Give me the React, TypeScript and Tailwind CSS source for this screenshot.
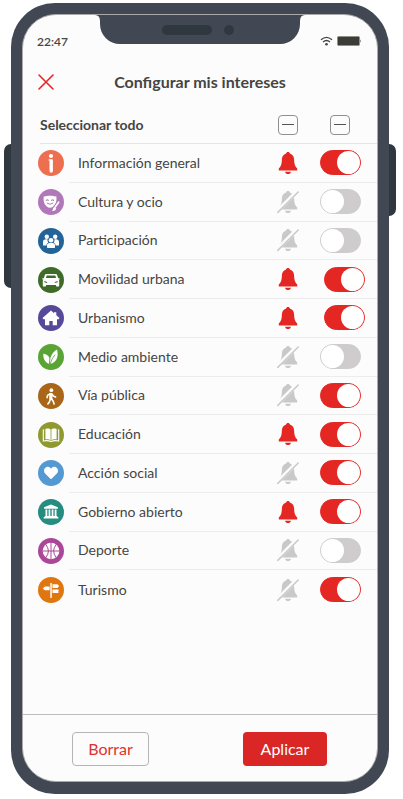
import { useState } from 'react'
import type { ReactNode } from 'react'
import clsx from 'clsx'
import { FaHeart } from 'react-icons/fa'

type Interest = {
  id: string
  label: string
  color: string
  icon: ReactNode
  notify: boolean
  enabled: boolean
  wide?: boolean
}

function InfoIcon() {
  return (
    <svg viewBox="0 0 26 26" className="size-[26px]" fill="currentColor" aria-hidden="true">
      <circle cx="13" cy="6" r="2.1" />
      <path d="M11.2 9.3h3a.7.7 0 0 1 .7.7v11a1.7 1.7 0 0 1-3.4 0V10.700h-.3a.7.7 0 0 1 0-1.400z" />
    </svg>
  )
}

function MaskIcon() {
  return (
    <svg viewBox="0 0 26 26" className="size-[26px]" aria-hidden="true">
      <path
        fill="currentColor"
        d="M5.8 7.3c1.6.5 2.7-.6 6.200-.6s4.600 1.100 6.300.6c.4 2.600.3 5.200-.8 7.400-1.200 2.300-3.200 4-5.500 4s-4.300-1.700-5.400-4c-1.100-2.200-1.200-4.800-.8-7.400z"
      />
      <g fill="none" stroke="#b078b8" strokeLinecap="round">
        <path d="M8.300 11.300q1-1.100 2 0M13.600 11.300q1-1.100 2 0" strokeWidth="1.100" />
        <path d="M9.200 14.300q2.800 2.200 5.600 0" strokeWidth="1" />
        <path d="M21 12.500l-5 7" strokeWidth="3.600" />
      </g>
      <path d="M20.600 13.200l-3.200 4.600" stroke="currentColor" strokeWidth="1.800" strokeLinecap="round" />
      <path fill="currentColor" d="M16.200 17.800l2.100 1.500c-.4 2-2.100 2.900-4.300 2.500 1.100-.8 1-3 2.200-4z" />
    </svg>
  )
}

function PeopleIcon() {
  return (
    <svg viewBox="0 0 26 26" className="size-[26px]" fill="currentColor" aria-hidden="true">
      <circle cx="8.800" cy="8.700" r="2.200" />
      <circle cx="17.200" cy="8.700" r="2.200" />
      <path d="M5 17v-3c0-1.800 1.200-2.800 3-2.800h1.600c-.3 1.600.1 2.600.9 3.300-1.300.5-2 1.500-2.100 3H5.600A.6.600 0 0 1 5 17z" />
      <path d="M21 17v-3c0-1.800-1.200-2.800-3-2.800h-1.600c.3 1.600-.1 2.600-.9 3.300 1.300.5 2 1.500 2.100 3h2.800a.6.600 0 0 0 .6-.5z" />
      <circle cx="13" cy="12.200" r="2.300" />
      <path d="M9 19.200v-1.600c0-1.500 1-2.500 2.500-2.500h3c1.500 0 2.500 1 2.500 2.500v1.600a.7.700 0 0 1-.7.700H9.700a.7.700 0 0 1-.7-.7z" />
    </svg>
  )
}

function CarIcon() {
  return (
    <svg viewBox="0 0 26 26" className="size-[26px]" aria-hidden="true">
      <path
        fill="currentColor"
        fillRule="evenodd"
        d="M8.600 7h8.800c1 0 1.600.5 1.900 1.400l.9 2.800h.9a.7.700 0 0 1 0 1.400h-.5c.4.500.6 1 .6 1.700v4.100a1.200 1.200 0 0 1-1.200 1.200h-.8a1.200 1.200 0 0 1-1.200-1.200v-.5H8v.5a1.200 1.200 0 0 1-1.200 1.200H6a1.200 1.200 0 0 1-1.200-1.200v-4.100c0-.7.200-1.200.6-1.700h-.5a.7.700 0 0 1 0-1.400h.9l.9-2.800C7 7.500 7.600 7 8.600 7zm.1 1.500-.8 2.600h10.200l-.8-2.600zM6.300 14v1.300l2.900.6v-1zm13.400 0-2.900.9v1l2.900-.6z"
      />
    </svg>
  )
}

function HouseIcon() {
  return (
    <svg viewBox="0 0 26 26" className="size-[26px]" fill="currentColor" aria-hidden="true">
      <path d="M13 5.600l3 2.600V7.200h2.300v3l3.200 2.800-1 1.300H19v6h-4.300V16h-3.400v4.300H7v-6H5.500l-1-1.300z" />
    </svg>
  )
}

function LeavesIcon() {
  return (
    <svg viewBox="0 0 26 26" className="size-[26px]" aria-hidden="true">
      <path fill="currentColor" d="M5.300 9.800c3.400.3 6 2.300 6.500 5.500l-.7 4.600c-3.900-1.200-6-4.800-5.800-10.100z" />
      <path fill="currentColor" d="M19 5.500c1.900 6.900-.2 12.900-7 14.600-.7-5.700 1.700-11.400 7-14.600z" />
      <path fill="none" stroke="#5aa435" strokeWidth=".8" d="M12.100 20.200q1.600-5.800 5-9.600M11.700 14.500v5.700" />
    </svg>
  )
}

function WalkerIcon() {
  return (
    <svg viewBox="0 0 26 26" className="size-[26px]" aria-hidden="true">
      <circle cx="13.400" cy="7.200" r="1.900" fill="currentColor" />
      <path d="M12.800 11.400v4" stroke="currentColor" strokeWidth="3.200" strokeLinecap="round" />
      <path
        fill="none"
        stroke="currentColor"
        strokeWidth="1.600"
        strokeLinecap="round"
        strokeLinejoin="round"
        d="M11.800 10.800l-2.300 1.500-.4 2.400M14 11l1.300 2 2.300 1M12.400 16l-.9 2.700-1.600 2.300M13.500 15.800l1.700 2.400.9 2.800"
      />
    </svg>
  )
}

function BookIcon() {
  return (
    <svg viewBox="0 0 26 26" className="size-[26px]" aria-hidden="true">
      <path fill="currentColor" d="M12.600 7.600C11.400 6.300 9.200 6.400 7.400 7v10.400c1.900-.3 3.800-.2 5.200 1zM13.400 7.600c1.200-1.300 3.400-1.200 5.200-.6v10.400c-1.900-.3-3.800-.2-5.200 1z" />
      <path fill="none" stroke="currentColor" strokeWidth="1.100" d="M6.200 8H5.300v11c2.700-.5 5.400-.5 7.700.5 2.300-1 5-1 7.700-.5V8h-.9" />
    </svg>
  )
}

function MuseumIcon() {
  return (
    <svg viewBox="0 0 26 26" className="size-[26px]" fill="currentColor" aria-hidden="true">
      <path d="M13 5.600l6.900 2.700v1.500H6.100V8.300zM7.500 10.500h1.800v6.400H7.500zM10.600 10.500h1.700v6.400h-1.700zM13.700 10.500h1.700v6.400h-1.700zM16.700 10.500h1.800v6.400h-1.800zM6.800 17.100h12.400v.7l1.200.5v1.200H5.600v-1.200l1.200-.5z" />
    </svg>
  )
}

function BallIcon() {
  return (
    <svg viewBox="0 0 26 26" className="size-[26px]" aria-hidden="true">
      <circle cx="13" cy="13" r="8.300" fill="currentColor" />
      <path
        fill="none"
        stroke="#ab4798"
        strokeWidth="1"
        d="M13 4.500v17M4.500 13h17M7.800 6.500q5.200 6.500 0 13M18.200 6.500q-5.200 6.500 0 13"
      />
    </svg>
  )
}

function SignpostIcon() {
  return (
    <svg viewBox="0 0 26 26" className="size-[26px]" fill="currentColor" aria-hidden="true">
      <path d="M12.300 6h1.500v15h-1.500zM14.500 7.200h4.900l1.800 1.900-1.800 1.900h-4.900zM14.500 12.500h6v3.600h-6zM11.600 9.600v3.700H6.800L4.900 11.500l1.900-1.900z" />
    </svg>
  )
}

const INTERESTS: Interest[] = [
  { id: 'info', label: 'Información general', color: 'bg-[#ee6e50]', icon: <InfoIcon />, notify: true, enabled: true },
  { id: 'cultura', label: 'Cultura y ocio', color: 'bg-[#b078b8]', icon: <MaskIcon />, notify: false, enabled: false },
  { id: 'participacion', label: 'Participación', color: 'bg-[#246398]', icon: <PeopleIcon />, notify: false, enabled: false },
  { id: 'movilidad', label: 'Movilidad urbana', color: 'bg-[#3f6b29]', icon: <CarIcon />, notify: true, enabled: true, wide: true },
  { id: 'urbanismo', label: 'Urbanismo', color: 'bg-[#574999]', icon: <HouseIcon />, notify: true, enabled: true, wide: true },
  { id: 'ambiente', label: 'Medio ambiente', color: 'bg-[#5aa435]', icon: <LeavesIcon />, notify: false, enabled: false },
  { id: 'via', label: 'Vía pública', color: 'bg-[#a96518]', icon: <WalkerIcon />, notify: false, enabled: true },
  { id: 'educacion', label: 'Educación', color: 'bg-[#909830]', icon: <BookIcon />, notify: true, enabled: true },
  { id: 'social', label: 'Acción social', color: 'bg-[#5599d3]', icon: <FaHeart className="size-3.5" />, notify: false, enabled: true },
  { id: 'gobierno', label: 'Gobierno abierto', color: 'bg-[#258d80]', icon: <MuseumIcon />, notify: true, enabled: true },
  { id: 'deporte', label: 'Deporte', color: 'bg-[#ab4798]', icon: <BallIcon />, notify: false, enabled: false },
  { id: 'turismo', label: 'Turismo', color: 'bg-[#e0760f]', icon: <SignpostIcon />, notify: false, enabled: true },
]

function BellIcon({ on }: { on: boolean }) {
  return (
    <svg viewBox="0 0 22 24" className="h-6 w-[22px]" aria-hidden="true">
      <path
        fill="currentColor"
        d="M11 1c1 0 1.800.6 1.900 1.500 2.900.9 4.100 3.200 4.200 6 .1 4.200.7 6.700 3.100 9v2H1.800v-2c2.400-2.300 3-4.800 3.100-9 .1-2.800 1.300-5.100 4.200-6C9.200 1.600 10 1 11 1z"
      />
      <path fill="currentColor" d="M8 20.800h6c-.4 1.500-1.400 2.300-3 2.300s-2.600-.8-3-2.300z" />
      {!on && (
        <>
          <path d="M-.500 22.200L20.800.9" stroke="#fcfcfc" strokeWidth="4" />
          <path d="M.8 22.400L21.200 2" stroke="currentColor" strokeWidth="1.500" strokeLinecap="round" />
        </>
      )}
    </svg>
  )
}

function BulkCheckbox({ label }: { label: string }) {
  return (
    <input
      type="checkbox"
      aria-label={label}
      className="flex size-5 appearance-none items-center justify-center rounded-[4px] border border-[#8f8f8f] before:h-px before:w-3 before:bg-[#555] checked:bg-red-100"
    />
  )
}

function StatusBar() {
  return (
    <div className="flex h-[43px] items-start">
      <div className="flex-1 pt-[19px] pl-[14px] text-xs leading-4 font-semibold">22:47</div>
      <svg viewBox="0 0 210 29" className="h-[29px] w-[210px]" aria-hidden="true">
        <path fill="#414853" d="M0 0h210q-5 0-5 6v3a20 20 0 0 1-20 20H25A20 20 0 0 1 5 9V6Q5 0 0 0z" />
        <rect x="67" y="10" width="50" height="10" rx="5" fill="#30383f" />
        <circle cx="134" cy="15" r="5" fill="#30383f" />
      </svg>
      <div className="flex flex-1 items-center justify-end gap-1 pt-[21px] pr-[15px]">
        <svg viewBox="0 0 13 10" className="h-2.5 w-[13px]" fill="none" stroke="currentColor" aria-hidden="true">
          <path d="M1 3.800Q6.500-1 12 3.800M3 6Q6.500 3 10 6" strokeWidth="1.300" />
          <circle cx="6.500" cy="8.300" r="1.300" fill="currentColor" stroke="none" />
        </svg>
        <svg viewBox="0 0 25 10" className="h-2.5 w-[25px]" aria-hidden="true">
          <rect x=".5" y=".5" width="22" height="9" rx="1" fill="#3b3b38" stroke="#8a8a88" strokeWidth=".6" />
          <path d="M23.300 3.300q1.400 1.700 0 3.400z" fill="#3b3b38" />
        </svg>
      </div>
    </div>
  )
}

function InterestRow({ item, onChange }: { item: Interest; onChange: (next: Interest) => void }) {
  return (
    <li className="group flex items-center pl-[15px]">
      <span className={clsx('flex size-[26px] items-center justify-center rounded-full text-white', item.color)}>
        {item.icon}
      </span>
      <div
        className={clsx(
          'ml-[5px] flex h-full flex-1 items-center border-b border-[#ececec] pl-[9px] group-last:border-b-0',
          item.wide ? 'pr-3' : 'pr-4',
        )}
      >
        <label htmlFor={item.id} className="flex-1 text-sm leading-5">
          {item.label}
        </label>
        <div className={clsx('flex items-center', item.wide ? 'gap-[25px]' : 'gap-[21px]')}>
          <button
            type="button"
            aria-pressed={item.notify}
            aria-label={`Notificaciones de ${item.label}`}
            onClick={() => onChange({ ...item, notify: !item.notify })}
            className={item.notify ? 'text-[#e52724]' : 'text-[#cac9ca]'}
          >
            <BellIcon on={item.notify} />
          </button>
          <input
            id={item.id}
            type="checkbox"
            role="switch"
            checked={item.enabled}
            onChange={(e) => onChange({ ...item, enabled: e.target.checked })}
            className="flex h-[25px] w-[41px] appearance-none rounded-full border border-[#cecccd] bg-[#cecccd] before:size-[23px] before:rounded-full before:bg-white checked:justify-end checked:border-[#e52724] checked:bg-[#e52724]"
          />
        </div>
      </div>
    </li>
  )
}

export default function App() {
  const [items, setItems] = useState(INTERESTS)

  const update = (next: Interest) => setItems(items.map((i) => (i.id === next.id ? next : i)))

  return (
    <div className="flex items-start bg-white pt-[3px] pr-[7px] pb-[5px] pl-1 font-['Lato',sans-serif] text-[#454543]">
      {/* Volume keys */}
      <div className="mt-[141px] h-36 w-[7px] rounded-l-[7px] bg-[#30383f]" />

      <div className="flex-1 rounded-[44px] bg-[#414853] px-[11px] pt-[11px] pb-3">
        <div className="overflow-hidden rounded-[34px] border border-[#a9a9a9] bg-[#fcfcfc]">
          <StatusBar />

          <header className="grid grid-cols-[1fr_auto_1fr] items-center pt-3 pr-[15px] pl-[15px]">
            <button type="button" aria-label="Cerrar" className="text-[#e52724]">
              <svg viewBox="0 0 16 16" className="size-4" stroke="currentColor" strokeWidth="1.600" strokeLinecap="round" aria-hidden="true">
                <path d="M1 1l14 14M15 1L1 15" />
              </svg>
            </button>
            <h1 className="text-base leading-6 font-bold">Configurar mis intereses</h1>
          </header>

          <main>
            {/* Select all */}
            <div className="mt-3 ml-[17px] flex h-[38px] items-center border-b border-[#e4e4e4] pr-[27px]">
              <h2 className="flex-1 text-sm leading-5 font-bold">Seleccionar todo</h2>
              <div className="flex gap-8">
                <BulkCheckbox label="Seleccionar todas las notificaciones" />
                <BulkCheckbox label="Seleccionar todos los intereses" />
              </div>
            </div>

            <ul className="mb-[105px] grid min-h-[465px] auto-rows-fr">
              {items.map((item) => (
                <InterestRow key={item.id} item={item} onChange={update} />
              ))}
            </ul>
          </main>

          <footer className="flex justify-between border-t border-[#bdbdbd] pt-[17px] pr-[50px] pb-[15px] pl-[49px]">
            <button type="button" className="h-[34px] w-[77px] rounded-[4px] border border-[#b5b5b5] text-base text-[#e0322d]">
              Borrar
            </button>
            <button type="button" className="h-[34px] w-[84px] rounded-[4px] bg-[#da2624] text-base text-white">
              Aplicar
            </button>
          </footer>
        </div>
      </div>

      {/* Power key */}
      <div className="mt-[141px] h-[72px] w-[7px] rounded-r-[7px] bg-[#30383f]" />
    </div>
  )
}
